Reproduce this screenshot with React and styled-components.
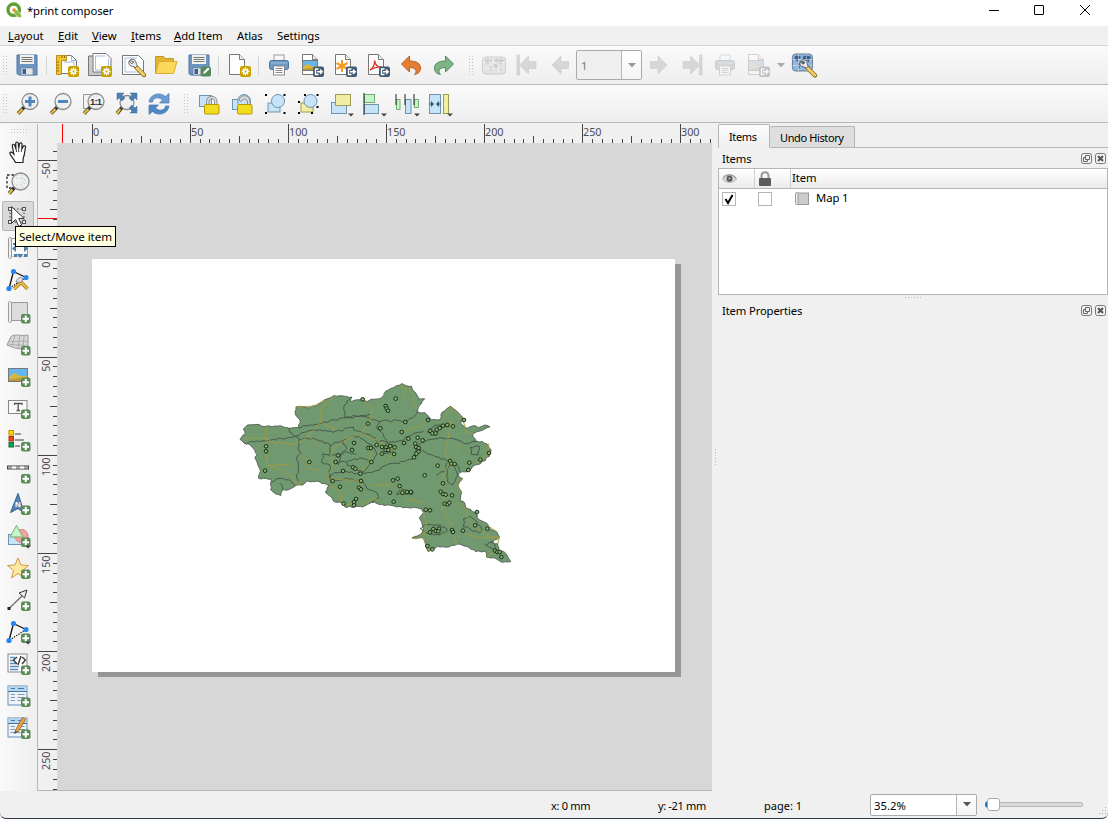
import React from "react";
import styled, { createGlobalStyle, css } from "styled-components";

const Global = createGlobalStyle`
  * { box-sizing: border-box; }
  html, body { margin: 0; background: #fff; }
  body { font-family: "Noto Sans", "Open Sans", sans-serif; font-size: 11.3px; color: #000; }
  svg { display: block; overflow: visible; }
`;

const Window = styled.div`
  width: 1108px;
  height: 819px;
  display: flex;
  flex-direction: column;
  background: #f0f0f0;
  border-bottom: 1px solid #2f3d4a;
  border-radius: 0 0 6px 6px;
  overflow: hidden;
`;

const TitleBar = styled.header`
  height: 26px;
  background: #fff;
  display: flex;
  align-items: flex-start;
  padding: 2px 17px 0 6px;
`;
const Title = styled.div`
  margin: 1px auto 0 5px;
  line-height: 16px;
  letter-spacing: -0.1px;
`;
const WindowButtons = styled.div`
  display: flex;
  gap: 35px;
  padding-top: 3px;
`;

const MenuBar = styled.nav`
  height: 20px;
  display: flex;
  padding-left: 8px;
  border-bottom: 1px solid #d5d5d5;
`;
const MenuItem = styled.div`
  width: ${(p) => p.$w}px;
  line-height: 20px;
  white-space: nowrap;
  letter-spacing: -0.05px;
  &::first-letter { text-decoration: ${(p) => (p.$plain ? "none" : "underline")}; }
`;

const ToolBar = styled.div`
  height: ${(p) => p.$h}px;
  display: flex;
  align-items: center;
  background: linear-gradient(#fafafa, #eeeeee);
  border-bottom: 1px solid #b8b8b8;
`;
const Slot = styled.div`
  width: 33px;
  height: 32px;
  flex: none;
  display: flex;
  align-items: center;
  justify-content: center;
  opacity: ${(p) => (p.$disabled ? 0.3 : 1)};
  filter: ${(p) => (p.$disabled ? "grayscale(0.75)" : "none")};
`;
const Handle = styled.div`
  flex: none;
  width: 5px;
  height: 19px;
  margin: ${(p) => p.$m};
  background-image: linear-gradient(#c4c4c4, #c4c4c4);
  background: conic-gradient(#c6c6c6 25%, transparent 0) 0 0 / 2px 2px;
  background: radial-gradient(circle at 0.5px 0.5px, #c4c4c4 0.6px, transparent 0.7px) 0 0 / 3px 3px;
`;
const Separator = styled.div`
  flex: none;
  width: 1px;
  height: 19px;
  margin: 0 3px;
  background: #d4d4d4;
`;

const Combo = styled.div`
  display: flex;
  flex: none;
  width: ${(p) => p.$w}px;
  height: ${(p) => p.$h}px;
  border: 1px solid #aaa;
  border-radius: 2px;
  background: ${(p) => (p.$disabled ? "#efefef" : "#fff")};
`;
const ComboText = styled.div`
  flex: 1;
  padding-left: ${(p) => (p.$muted ? 4 : 3)}px;
  padding-top: 1px;
  display: flex;
  align-items: center;
  color: ${(p) => (p.$muted ? "#777" : "#000")};
`;
const ComboButton = styled.div`
  width: 20px;
  border-left: 1px solid #b5b5b5;
  background: linear-gradient(#fff, #f4f4f4);
  display: flex;
  align-items: center;
  justify-content: center;
  color: ${(p) => (p.$muted ? "#999" : "#555")};
`;
const ArrowSlot = styled.div`
  width: 13px;
  display: flex;
  justify-content: center;
  color: #aaa;
`;

const Body = styled.main`
  flex: 1;
  min-height: 0;
  display: flex;
  padding-top: 1px;
`;
const SideTools = styled.aside`
  width: 38px;
  flex: none;
  border-right: 1px solid #b8b8b8;
  background: linear-gradient(90deg, #fafafa, #eeeeee);
  display: flex;
  flex-direction: column;
`;
const SideHandle = styled.div`
  width: 18px;
  height: 5px;
  margin: 5px 0 2px 11px;
  background: radial-gradient(circle at 0.5px 0.5px, #c4c4c4 0.6px, transparent 0.7px) 0 0 / 3px 3px;
`;
const SideSlot = styled.div`
  width: 32px;
  height: 32px;
  flex: none;
  margin-left: 2px;
  display: flex;
  align-items: center;
  justify-content: center;
  border-radius: 2px;
  position: relative;
  ${(p) => p.$active && css`
    height: 30px;
    margin-top: 1px;
    margin-bottom: 1px;
    background: #d9d9d9;
    box-shadow: inset 0 0 0 1px #b4b4b4;
  `}
`;
const Tooltip = styled.div`
  position: absolute;
  z-index: 5;
  left: 13px;
  top: 25px;
  width: 101px;
  height: 21px;
  border: 1px solid #000;
  background: #ffffe1;
  padding-left: 3px;
  line-height: 19px;
  font-size: 11.6px;
  letter-spacing: -0.05px;
  white-space: nowrap;
`;
const Cursor = styled.div`
  position: absolute;
  z-index: 6;
  left: 9px;
  top: 5px;
`;

const Workspace = styled.section`
  width: 674px;
  flex: none;
  display: grid;
  grid-template: 19px 1fr / 19px 1fr;
  border-bottom: 1px solid #b8b8b8;
`;
const Canvas = styled.div`
  background: #d7d7d7;
  padding: 116px 0 0 35px;
`;
const Paper = styled.div`
  width: 583px;
  height: 413px;
  background: #fff;
  box-shadow: 6px 5px 0 0 #969696;
  padding: 116px 0 0 138px;
`;

const Dock = styled.section`
  flex: 1;
  display: flex;
  min-width: 0;
`;
const Splitter = styled.div`
  width: 6px;
  display: flex;
  align-items: center;
  justify-content: center;
`;
const Dots = styled.div`
  width: ${(p) => (p.$v ? 1 : 17)}px;
  height: ${(p) => (p.$v ? 17 : 1)}px;
  background: repeating-linear-gradient(${(p) => (p.$v ? "180deg" : "90deg")}, #b5b5b5 0 1px, transparent 1px 3px);
`;
const DockColumn = styled.div`
  flex: 1;
  display: flex;
  flex-direction: column;
`;
const Tabs = styled.div`
  height: 24px;
  display: flex;
  align-items: flex-end;
  box-shadow: inset 0 -1px #b8b8b8;
`;
const Tab = styled.div`
  width: ${(p) => p.$w}px;
  height: ${(p) => (p.$active ? 24 : 22)}px;
  line-height: ${(p) => (p.$active ? 24 : 22)}px;
  border: 1px solid #b5b5b5;
  border-left-width: ${(p) => (p.$active ? 1 : 0)}px;
  border-bottom-color: ${(p) => (p.$active ? "#f0f0f0" : "#b8b8b8")};
  border-radius: 2px 2px 0 0;
  padding-left: 10px;
  white-space: nowrap;
  font-size: 11px;
  letter-spacing: -0.38px;
  background: ${(p) => (p.$active ? "linear-gradient(#fcfcfc,#f0f0f0)" : "#dedede")};
`;
const DockTitle = styled.div`
  height: ${(p) => p.$h}px;
  display: flex;
  align-items: center;
  padding: 0 2px 0 4px;
  gap: 3px;
`;
const DockName = styled.div`
  flex: 1;
  letter-spacing: -0.16px;
`;
const List = styled.div`
  height: 127px;
  border: 1px solid #b5b5b5;
  background: #fff;
`;
const Row = styled.div`
  height: ${(p) => (p.$head ? 20 : 19)}px;
  display: grid;
  grid-template-columns: 36px 36px 1fr;
  align-items: center;
  ${(p) => p.$head && css`
    background: linear-gradient(#ffffff, #ebebeb);
    border-bottom: 1px solid #b5b5b5;
  `}
`;
const Cell = styled.div`
  height: 100%;
  display: flex;
  align-items: center;
  padding-left: ${(p) => p.$pl}px;
  border-right: ${(p) => (p.$line ? "1px solid #d0d0d0" : "0")};
  gap: 7px;
`;
const Label = styled.span`
  padding-bottom: ${(p) => p.$up}px;
  letter-spacing: -0.1px;
`;
const CheckBox = styled.div`
  width: 14px;
  height: 14px;
  border: 1px solid #b5b5b5;
  background: #fff;
`;
const SplitRow = styled.div`
  height: 5px;
  display: flex;
  align-items: center;
  justify-content: center;
`;

const StatusBar = styled.footer`
  height: 27px;
  flex: none;
  display: flex;
  align-items: center;
  padding-left: 551px;
`;
const StatusText = styled.div`
  width: ${(p) => p.$w}px;
  padding-top: 2px;
  font-size: 11px;
  letter-spacing: ${(p) => p.$ls}px;
`;
const Slider = styled.div`
  width: 98px;
  height: 14px;
  margin-left: 8px;
  display: flex;
  align-items: center;
`;
const Cap = styled.div`
  width: 5px;
  height: 7px;
  margin-right: -3px;
  border-radius: 4px 0 0 4px;
  background: #1b6fb3;
`;
const Knob = styled.div`
  width: 13px;
  height: 13px;
  position: relative;
  border: 1px solid #aaa;
  border-radius: 3px;
  background: #fff;
`;
const Track = styled.div`
  flex: 1;
  height: 5px;
  border: 1px solid #b8b8b8;
  border-left: 0;
  border-radius: 0 2px 2px 0;
  background: #d9d9d9;
`;
const Grip = styled.div`
  margin: 14px 1px 0 auto;
`;

const Ico = ({ children, s = 24 }) => (
  <svg width={s} height={s} viewBox={`0 0 ${s} ${s}`}>{children}</svg>
);
const Down = () => <svg width="8" height="5"><path d="M0 0h8L4 4.5z" fill="currentColor" /></svg>;

const NewBadge = () => (
  <g>
    <rect x="13" y="13" width="11" height="11" rx="2" fill="#c8a300" />
    <path d="M18.500 14.500v8M14.500 18.500h8M15.800 15.800l5.400 5.400M21.200 15.800l-5.400 5.400" stroke="#fff" strokeWidth="1.300" />
    <circle cx="18.500" cy="18.500" r="2.300" fill="#fff" /><circle cx="18.500" cy="18.500" r="1" fill="#c8a300" />
  </g>
);
const ExportBadge = () => (
  <g>
    <rect x="13" y="13.500" width="11" height="10.500" rx="2" fill="#415a70" />
    <path d="M18.500 16h-3v5.500h3M17 18.800h5M20 16.500l2.300 2.300L20 21" fill="none" stroke="#fff" strokeWidth="1.400" />
  </g>
);
const Plus = ({ x = 15, y = 13 }) => (
  <g transform={`translate(${x} ${y})`}>
    <rect width="9.500" height="9.500" rx="2" fill="#5a8c5a" />
    <path d="M4.750 1.500v6.500M1.500 4.750H8" stroke="#fff" strokeWidth="2" />
  </g>
);
const PageShape = () => (
  <g><path d="M2.500 1.500h10l5 5v15h-15z" fill="#fdfdfd" stroke="#777" /><path d="M12.500 1.500v5h5" fill="#eee" stroke="#777" /></g>
);
const Floppy = () => (
  <g>
    <path d="M2 2h20v20H3.500L2 20.500z" fill="#6d94c1" stroke="#4d76a5" />
    <rect x="5" y="2" width="14" height="9" fill="#f1f1ee" />
    <path d="M6.500 4.500h11M6.500 6.500h11M6.500 8.500h11" stroke="#777" />
    <path d="M6 15h12v7H6z" fill="#e4e4e2" stroke="#55779d" strokeWidth=".6" /><rect x="7.500" y="16" width="3.500" height="5" fill="#3f5f86" />
  </g>
);
const Wrench = () => (
  <g>
    <path d="M13.500 13l8 8" stroke="#8a7020" strokeWidth="4.500" strokeLinecap="round" />
    <path d="M14 13.500l7.300 7.300" stroke="#f2ce66" strokeWidth="2.800" strokeLinecap="round" />
    <path d="M7 6.500c2-2 5-1.500 6 .5.800 1.500.5 3 1.800 4.700l-2 2c-1.500-1.500-3-1-4.800-2-1.700-1-2-3-1.500-4.500l2.500 2.300 1.700-.5.300-1.500z" fill="#ececec" stroke="#555" strokeWidth=".9" />
  </g>
);
const Lens = ({ x = 15, y = 9.5, r = 8 }) => (
  <g>
    <path d={`M${x - r * 0.7} ${y + r * 0.7}L3 21.500`} stroke="#333" strokeWidth="3.600" />
    <path d={`M${x - r * 0.95} ${y + r * 0.95}L3 21.500`} stroke="#eec12e" strokeWidth="2.200" />
    <circle cx={x} cy={y} r={r} fill="#eef0f0" fillOpacity=".92" stroke="#8a8d8d" strokeWidth="1.300" />
  </g>
);
const Printer = () => (
  <g>
    <rect x="7" y="2" width="10" height="8" fill="#f7f7f7" stroke="#999" />
    <rect x="2.500" y="7.500" width="19" height="9" rx="2" fill="#6d99c4" stroke="#48749f" />
    <path d="M4 10h16" stroke="#9cc0e0" />
    <rect x="6.500" y="13" width="11" height="9" fill="#fff" stroke="#888" />
    <path d="M8.500 15.500h7M8.500 17.500h7M8.500 19.500h7" stroke="#888" />
  </g>
);
const Picture = ({ x, y, w, h }) => (
  <g transform={`translate(${x} ${y})`}>
    <rect width={w} height={h} fill="#63b4ef" stroke="#777" />
    <path d={`M.5 ${h * 0.65}L${w * 0.3} ${h * 0.32} ${w * 0.65} ${h * 0.6} ${w - 0.5} ${h * 0.55}V${h - 0.5}H.5z`} fill="#d6b745" />
    <path d={`M.5 ${h * 0.85}L${w - 0.5} ${h * 0.65}V${h - 0.5}H.5z`} fill="#b99a35" />
  </g>
);
const MiniSun = () => (
  <g stroke="#f79a1e" strokeWidth="2"><path d="M9 7v12M3.500 10l11 6M14.500 10l-11 6" /><circle cx="9" cy="13" r="1.500" fill="#f79a1e" /></g>
);
const WorldMap = ({ color, land }) => (
  <g>
    <rect x=".5" y="4" width="23" height="17" rx="3.500" fill={color} stroke="#62748a" />
    <path d="M3 6.500l3-1 3.500.5.500 2-2 1.500-1 2-2-.5-2-2zM7 12.500l3 1.500-1 3-1 2.500-1-3zM12 7l3-1.500 5 .5 2 1.500-2 2.500-1 2.500-1.500-2-1 1.500-1-2.500-2 0zM12 11l3 .5.500 2-1.500 4-1-3-1.500-1.500zM18 15l2.500.5-.5 2-2-.5z" fill={land} opacity=".85" />
    <path d="M.5 9.500h23M.5 15.500h23M7.500 4v17M16.500 4v17" stroke="#fff" strokeWidth=".6" opacity=".8" />
  </g>
);
const Arrow = ({ flip, bar }) => (
  <g transform={flip ? "translate(24 0) scale(-1 1)" : undefined} fill="#8896a4" stroke="#77828e" strokeWidth=".8">
    {bar && <rect x="2" y="2" width="2.500" height="20" />}
    <path d={bar ? "M4.500 12L13.500 3v5.500H21v7h-7.500V21z" : "M4 12l9-9v5.500h7.500v7H13V21z"} />
  </g>
);
const Padlock = ({ open }) => (
  <g>
    <path d={open ? "M9 8.500c1-7 11-6 11 1v5h-2.500V10c0-4-5.500-4-6-.5z" : "M9.500 14V9.500c0-7 10.500-7 10.500 0V14h-2.500V9.500c0-3.700-5.500-3.700-5.500 0V14z"} fill="#ddd" stroke="#777" strokeWidth=".8" />
    <rect x="7.500" y="12.500" width="14.500" height="9.500" rx="1" fill="#f2dc1e" stroke="#b89800" />
  </g>
);
const BlackDots = ({ pts }) => <g>{pts.map(([x, y]) => <rect key={x + "-" + y} x={x} y={y} width="2" height="2" />)}</g>;
const Drop = () => <path d="M19 21.500h6l-3 3z" fill="#444" />;
const BLUE = { fill: "#c6e3f7", stroke: "#6f94ad" };
const GREEN = { fill: "#c3f5c6", stroke: "#74ad78" };
const YELLOW = { fill: "#f1eea2", stroke: "#9e9a58" };

const icons = {
  save: <Ico><Floppy /></Ico>,
  newLayout: <Ico><path d="M5.500 2.500h11l5 5v13h-16z" fill="#fff" stroke="#777" /><path d="M16.500 2.500v5h5M9 9h10v9" fill="none" stroke="#9db4e0" /><path d="M1.500 2.500h10v5h-5v14h-5z" fill="#f3c52c" stroke="#b8901a" /><path d="M4 5h.5M7 3v2M9.500 3v2M2 9h2M2 12h2M2 15h2M2 18h2" stroke="#8b6b10" /><NewBadge /></Ico>,
  duplicate: <Ico><path d="M.5 3h18v19.500H.5z" fill="#c9c9c9" stroke="#777" /><path d="M5 .5h13l5 5v13.500H5z" fill="#fff" stroke="#777" /><path d="M7.500 3h10M7.500 3v14h13V6" fill="none" stroke="#a9bde6" /><NewBadge /></Ico>,
  manage: <Ico><path d="M1.500 2.500h16l5 5v14h-21z" fill="#fff" stroke="#777" /><path d="M4 5h12M4 5v14h16" fill="none" stroke="#a9bde6" /><g transform="translate(1.500 1)"><Wrench /></g></Ico>,
  open: <Ico><path d="M1.500 20.500V3.500h8l2 2h8V9" fill="#e3b52e" stroke="#c1962a" /><path d="M1.500 20.500L5 8.500h18L19.500 20.500z" fill="#fdd757" stroke="#d9ac32" /></Ico>,
  saveAs: <Ico><Floppy /><rect x="13.500" y="13.500" width="10.500" height="10" rx="2" fill="#568a5c" /><path d="M16 21l1-2.500 4-4 1.500 1.500-4 4z" fill="#fff" /></Ico>,
  addPage: <Ico><PageShape /><NewBadge /></Ico>,
  print: <Ico><Printer /></Ico>,
  exportImage: <Ico><PageShape /><Picture x={2.5} y={7.5} w={15} h={10} /><ExportBadge /></Ico>,
  exportSvg: <Ico><PageShape /><MiniSun /><ExportBadge /></Ico>,
  exportPdf: <Ico><PageShape /><path d="M4 17c3-1.500 5-6 4.500-9.500 1 5 4 7 7 6.500-4-.5-8 1-11.500 3z" fill="none" stroke="#dc3b30" strokeWidth="1.400" /><ExportBadge /></Ico>,
  undo: <Ico><path d="M2.500 11L10.500 3v5c7 0 11 2.500 11 7 0 4-2.500 6-6 6.500 3-3 2-7-5-7V19z" fill="#e57c33" stroke="#bb5f24" /></Ico>,
  redo: <Ico><path d="M21.500 11L13.500 3v5c-7 0-11 2.500-11 7 0 4 2.500 6 6 6.500-3-3-2-7 5-7V19z" fill="#7fb487" stroke="#538d5f" /></Ico>,
  atlas: <Ico><WorldMap color="#c2c4c6" land="#616569" /></Ico>,
  first: <Ico><Arrow bar /></Ico>,
  prev: <Ico><Arrow /></Ico>,
  next: <Ico><Arrow flip /></Ico>,
  last: <Ico><Arrow flip bar /></Ico>,
  atlasSettings: <Ico><g transform="translate(0 -3) scale(.87 1)"><WorldMap color="#8fb6e0" land="#284f7c" /></g><g transform="translate(1.500 1.500)"><Wrench /></g></Ico>,
  zoomIn: <Ico><Lens /><path d="M15 4.500v10M10 9.500h10" stroke="#5084ba" strokeWidth="3" /></Ico>,
  zoomOut: <Ico><Lens /><path d="M10 9.500h10" stroke="#5084ba" strokeWidth="3" /></Ico>,
  zoomActual: <Ico><rect x="2.500" y="2.500" width="13" height="14" fill="#f2f2f2" stroke="#999" /><Lens /><text x="9" y="13" fontSize="9.500" fontWeight="700" fontFamily="Liberation Sans" textLength="12" fill="#333">1:1</text></Ico>,
  zoomFull: <Ico><Lens x={13} y={10.5} r={7} /><g fill="#4f7fae" stroke="#3f6c99" strokeWidth=".5"><path d="M3 1h7L8 3l3 3-3 3-3-3-2 2zM23 1h-7l2 2-3 3 3 3 3-3 2 2zM23 21h-7l2-2-3-3 3-3 3 3 2-2z" /></g></Ico>,
  refresh: <Ico><path d="M2 10C3 2 13-.5 18.500 4.500L22 1.500v9.500h-9.500l3-3C11 4 6 6 5.500 10z" fill="#6a9bd2" stroke="#4878ad" strokeWidth=".7" /><path d="M22 14c-1 8-11 10.500-16.500 5.500L2 22.500V13h9.500l-3 3c4.500 4 9.500 2 10-2z" fill="#4f87c4" stroke="#4878ad" strokeWidth=".7" /></Ico>,
  lock: <Ico><rect x="2.500" y="3.500" width="12" height="11" {...BLUE} /><Padlock /></Ico>,
  unlock: <Ico><rect x="2.500" y="7.500" width="10" height="10" {...BLUE} /><circle cx="14" cy="9" r="6.500" {...BLUE} /><Padlock open /></Ico>,
  group: <Ico><rect x="5" y="11" width="12" height="9" {...BLUE} /><circle cx="15" cy="9" r="6.500" {...BLUE} /><BlackDots pts={[[2, 2], [20.5, 2], [2, 20], [20.5, 20]]} /></Ico>,
  ungroup: <Ico><rect x="5" y="11" width="12" height="9" {...YELLOW} /><circle cx="14.500" cy="9" r="6.500" {...BLUE} /><BlackDots pts={[[8, 2], [20.5, 2], [2, 9], [2, 20], [15, 20], [20.5, 14]]} /></Ico>,
  raise: <Ico><rect x="2.500" y="10.500" width="15" height="11" {...BLUE} /><rect x="6.500" y="2.500" width="15" height="11" {...YELLOW} /><Drop /></Ico>,
  align: <Ico><rect x="2.500" y="2.500" width="10" height="8" {...GREEN} /><rect x="2.500" y="12.500" width="14" height="9" {...BLUE} /><path d="M2 1v22" stroke="#222" /><Drop /></Ico>,
  distribute: <Ico><rect x="1.500" y="7.500" width="3.500" height="10" {...GREEN} /><rect x="10.500" y="7.500" width="5.500" height="14" {...BLUE} /><rect x="19.500" y="7.500" width="4" height="8" {...GREEN} /><path d="M1 2v11M10 2v11M19 2v11" stroke="#222" /><Drop /></Ico>,
  resize: <Ico><rect x="1.500" y="2.500" width="11" height="19" {...BLUE} /><path d="M1 12h4M9 12h4" stroke="#35506a" /><path d="M3 9l3 3-3 3zM11 9l-3 3 3 3z" fill="#35506a" /><rect x="15.500" y="2.500" width="5" height="19" {...YELLOW} /><Drop /></Ico>,
};

const Nodes = () => (
  <g>
    <path d="M7.500 3.500L3 20.500M7.500 3.500L20 9.500" stroke="#111" strokeWidth="1.300" /><path d="M20 9.500L3 20.500" stroke="#111" strokeWidth="1.200" strokeDasharray="1.300 1.300" />
    {[[7.5, 3.5], [20, 9.5], [3, 20.5]].map(([x, y]) => <circle key={x} cx={x} cy={y} r="2.600" fill="#2684f7" />)}
  </g>
);
const MapScroll = () => (
  <g>
    <path d="M5 2.500h16.500v18H5z" fill="#dcdcdc" stroke="#999" />
    <path d="M2.500 3c0-2 3-2 3 0v18c0 2-3 2-3 0z" fill="#eee" stroke="#999" />
  </g>
);
const TableIcon = () => (
  <g>
    <rect x="2" y="2" width="19" height="19" fill="#eef3f8" stroke="#6a8fb4" /><rect x="2.500" y="2.500" width="18" height="4.500" fill="#b3d6f0" />
    <path d="M2 7.500h19M5 4.500h4M12 4.500h6" stroke="#4878a8" strokeWidth="1.200" />
    <path d="M4.500 10.500H9M11.500 10.500h7M4.500 13.500H9M11.500 13.500h7M4.500 16.500H9M11.500 16.500h3" stroke="#7e98b5" strokeWidth="1.200" />
  </g>
);

const sideIcons = {
  pan: <Ico><path d="M9.500 22.500C8 18.500 4 15.500 3.800 13c.5-1.500 2.200-1 4 1L6.300 6c-.3-2 2-2.400 2.500-.5L10 9l-.3-5.500c0-2 2.400-2 2.600 0L12.700 8.500 13.500 4c.4-1.800 2.600-1.400 2.500.4L15.800 9l1.400-2.500c.9-1.500 2.700-.8 2.300.9-1 4-.5 7-2.300 10.600l-.2 4.500z" fill="#fff" stroke="#222" strokeWidth="1.200" /><path d="M10 9l.6 3M12.700 8.500v3.500M15.800 9l-.6 3" stroke="#444" /></Ico>,
  zoom: <Ico><rect x="1" y="3" width="16" height="13" fill="none" stroke="#222" strokeWidth="1.300" strokeDasharray="2.500 2" /><Lens x={14.5} y={9.5} r={8.5} /><path d="M10 6h8M10 13h8M19 7v5" stroke="#ccc" strokeDasharray="2 2" /></Ico>,
  select: <Ico><rect x="4" y="5" width="14" height="13" fill="none" stroke="#444" strokeDasharray="1.500 2" />{[[2.5, 3.5], [16.5, 3.5], [2.5, 16.5], [16.5, 16.5]].map(([x, y]) => <rect key={x + "-" + y} x={x} y={y} width="3" height="3" fill="#eee" stroke="#555" />)}</Ico>,
  moveContent: <Ico><MapScroll /><rect x="6" y="3" width="15" height="17.500" fill="#fafafa" /><path d="M14 3l3.500 4h-7zM14 22l3.500-4h-7zM6 12.500l4-3.500v7zM22 12.500L18 9v7z" fill="#4d7da9" /><path d="M8 18h3v3H8zM18 18h3v3h-3zM7 7h3v2H7z" fill="#4d7da9" /></Ico>,
  editNodes: <Ico><Nodes /><path d="M8 21L15 14.500M14 13l7.500 8" stroke="#9c741c" strokeWidth="3.300" /><path d="M8 21L15 14.500M14 13l7.500 8" stroke="#edbc3f" strokeWidth="2" /><path d="M10 14c1-4 5-6 7-3l-2 3.500z" fill="#ddd" stroke="#888" /></Ico>,
  addMap: <Ico><MapScroll /><Plus y={14} /></Ico>,
  add3d: <Ico><path d="M5 4.500c5-3 9 0 17-1.500v15c-7-2-10 0-21-5z" fill="#d8d8d8" stroke="#999" /><path d="M3.500 9c6 2 10-1 18 .5M2.500 12c8 2 11 0 19 2M9 3L6 14.500M14 3l-2 13M18 3.500l-1 14" fill="none" stroke="#aaa" /><Plus y={14} /></Ico>,
  addPicture: <Ico><Picture x={2.5} y={4.5} w={19} h={13} /><Plus y={13.5} /></Ico>,
  addLabel: <Ico><rect x="2.500" y="4.500" width="18.500" height="13" fill="#fafafa" stroke="#888" /><path d="M8.500 9V7.500h7.500V9M12.200 7.500v7M10.500 14.500h3.500" fill="none" stroke="#555" strokeWidth="1.300" /><Plus y={13.5} /></Ico>,
  addLegend: <Ico><g strokeWidth="1"><rect x="3" y="2.500" width="4.500" height="4.500" fill="#ffd500" stroke="#c78c00" /><rect x="3" y="8.500" width="4.500" height="4.500" fill="#f04a12" stroke="#a83208" /><rect x="3" y="14.500" width="4.500" height="4.500" fill="#12a454" stroke="#0c6b36" /></g><path d="M9 6h6M9 12h9M9 18h5" stroke="#999" strokeWidth="2" /><Plus y={14} /></Ico>,
  addScale: <Ico><rect x="1.500" y="6" width="21" height="3" fill="#bbb" stroke="#444" /><path d="M6 7.500h4M14 7.500h4" stroke="#fff" strokeWidth="2" /><Plus y={14} /></Ico>,
  addNorth: <Ico><path d="M12 1.500l6.500 20-6.500-5-7.500 4z" fill="#5584b4" stroke="#325d88" /><text x="9" y="14.500" fontSize="8" fontWeight="700" fontFamily="Liberation Sans" fill="#fff">N</text><Plus y={13.5} /></Ico>,
  addShape: <Ico><rect x="2.500" y="10.500" width="13" height="10" {...BLUE} /><circle cx="15.500" cy="12" r="6.500" fill="#f5a1a1" stroke="#d67878" /><path d="M10.500 1.500l6.500 11.500H4z" {...GREEN} /><Plus y={13.5} /><Drop /></Ico>,
  addMarker: <Ico><path d="M12 2l3 7 7.500.5-6 5 2 7.500-6.500-4.500L5.500 22l2-7.500-6-5L9 9z" fill="#fde9a0" stroke="#d19a48" /><Plus y={13.5} /></Ico>,
  addArrow: <Ico><path d="M3 20.500L17 7" stroke="#777" strokeWidth="1.500" /><path d="M21 2l-2.500 8L13 5z" fill="#eee" stroke="#333" /><rect x="1.500" y="19" width="3" height="3" fill="#222" /><Plus y={13.5} /></Ico>,
  addNode: <Ico><Nodes /><Plus y={13.5} /><Drop /></Ico>,
  addHtml: <Ico><rect x="2" y="2" width="19" height="18" fill="#fbfbfb" stroke="#888" /><path d="M4 5.500h5M4 8.500h4M4 11.500h6M4 14.500h9M4 17.500h8" stroke="#5b8bbd" strokeWidth="1.600" /><path d="M11 5l-3.500 3 3.500 4M16 5l3.500 3-3.500 4M15 4l-3 9" fill="none" stroke="#333" strokeWidth="1.300" /><Plus y={13.5} /></Ico>,
  addTable: <Ico><TableIcon /><Plus y={13.5} /></Ico>,
  addFixed: <Ico><TableIcon /><path d="M9 15L16.500 1.500l3 2L12 16z" fill="#e9a443" stroke="#93641d" strokeWidth=".8" /><path d="M9 15l3 1-4 2z" fill="#444" /><Plus y={13.5} /></Ico>,
};

const TICKS = Array.from({ length: 100 }, (_, i) => i - 30);
const RulerTop = () => (
  <svg width="655" height="19" style={{ gridColumn: 2 }} shapeRendering="crispEdges">
    {TICKS.map((k) => {
      const x = Math.floor(35.05 + k * 9.815);
      if (x < 8 || x > 654) return null;
      const top = k % 10 === 0 ? 0 : k % 5 === 0 ? 12 : 15;
      return (
        <g key={k}>
          <rect x={x} y={top} width="1" height={19 - top} fill="#444" />
          {k % 10 === 0 && <text x={x + 1} y="11.500" fontSize="10.800" fill="#4c4c5c">{k * 5}</text>}
        </g>
      );
    })}
    <rect x="5" y="0" width="1" height="19" fill="#f00" />
  </svg>
);
const RulerLeft = () => (
  <svg width="19" height="647" shapeRendering="crispEdges">
    {TICKS.map((k) => {
      const y = Math.floor(116.02 + k * 9.815);
      if (y < 4 || y > 646) return null;
      const left = k % 10 === 0 ? 0 : k % 5 === 0 ? 12 : 15;
      return (
        <g key={k}>
          <rect x={left} y={y} width={19 - left} height="1" fill="#444" />
          {k % 10 === 0 && <text transform={`translate(11.500 ${y + 2.5}) rotate(-90)`} textAnchor="end" fontSize="10.800" fill="#4c4c5c">{k * 5}</text>}
        </g>
      );
    })}
    <rect x="0" y="75" width="19" height="1" fill="#f00" />
  </svg>
);

/* Breaks every straight run into short irregular steps, as a surveyed border has. */
const rough = (d, amp, step = 11) => {
  let seed = 7;
  const rnd = () => {
    seed = (seed * 16807) % 2147483647;
    return seed / 2147483647 - 0.5;
  };
  const close = d.endsWith("z");
  return d.replace("z", "").split("M").filter((s) => s.trim()).map((part) => {
    const n = part.match(/-?[\d.]+/g).map(Number);
    const pts = [];
    for (let i = 0; i < n.length; i += 2) pts.push([n[i], n[i + 1]]);
    if (close) pts.push(pts[0]);
    const out = [pts[0].join(" ")];
    for (let i = 1; i < pts.length; i++) {
      const [ax, ay] = pts[i - 1];
      const [bx, by] = pts[i];
      const k = Math.max(1, Math.round(Math.hypot(bx - ax, by - ay) / step));
      for (let j = 1; j < k; j++) {
        out.push(`${(ax + ((bx - ax) * j) / k + rnd() * amp).toFixed(1)} ${(ay + ((by - ay) * j) / k + rnd() * amp).toFixed(1)}`);
      }
      out.push(`${bx} ${by}`);
    }
    return `M${out.join("L")}${close ? "z" : ""}`;
  }).join("");
};

const OUTLINE = "M30 193L46 176 40 162 52 150 78 148 105 155 150 152 178 160 205 158 210 135 197 120 198 95 230 98 262 92 285 74 312 62 365 66 362 80 395 74 410 80 425 72 455 68 475 45 515 26 545 34 556 52 568 72 584 71 568 92 562 108 590 118 604 134 630 134 636 112 660 94 680 108 698 126 692 146 712 160 735 152 745 158 765 150 780 156 750 168 728 176 738 198 770 206 784 226 778 244 752 266 735 270 715 288 690 292 686 304 698 310 684 330 695 352 690 378 704 384 708 400 738 412 744 432 772 446 780 462 800 470 808 486 780 502 802 506 806 526 826 534 842 560 815 562 790 548 770 546 765 528 738 530 710 514 680 508 656 516 622 514 595 530 580 490 546 489 572 478 580 460 568 430 580 412 575 400 520 398 490 392 455 388 425 382 398 396 345 396 335 384 310 378 286 350 296 332 262 318 232 318 218 330 196 332 176 344 160 344 152 362 140 358 122 344 124 312 86 310 90 282 75 250 82 240 68 218 58 208 44 206z";
const BOUNDS = [
  "M178 160L190 182 208 192 204 220 212 236 200 246 205 280 200 300 206 318",
  "M46 206L80 198 120 196 178 188 230 170 270 164 310 172 370 156",
  "M205 158L240 150 275 145 340 128 400 124 450 140 500 136 525 142 552 124 562 108",
  "M365 66L342 92 344 128 420 118", "M370 156L380 168 420 180 445 200 500 200 545 180 580 168",
  "M450 140L440 160 460 178 470 200", "M208 192L250 190 300 210 296 240 278 236 274 262 300 270 300 300 296 332",
  "M300 210L340 196 370 182 400 194 430 214 440 240 425 260 390 248 350 262 310 262",
  "M296 240L330 242 345 230 380 240", "M300 300L340 288 380 296 430 290 470 270 550 254 560 220 570 206 600 194 630 188 680 194 715 206 740 200",
  "M300 300L310 320 350 310 400 322 410 340 440 352 445 370 425 382",
  "M350 262L370 280 400 290 425 260", "M560 220L600 238 650 258 680 268 690 292",
  "M650 264L652 320 668 330 682 302 668 268", "M618 300L650 286 658 272",
  "M570 460L594 448 630 450 652 466 630 480 590 474z", "M700 432L718 424 740 440 756 462 748 475 720 462 700 456z",
  "M766 508L790 502 800 526 776 516z", "M722 216L748 214 744 240 724 238z",
  "M124 320L152 310 176 314 196 332M158 344L150 325", "M500 360L515 342 548 350 548 358 515 358z", "M340 196L350 220 332 236 324 270", "M455 220L470 206 490 212 488 230 458 236", "M600 160L625 150 660 154M590 170L620 180",
];
const ROADS = [
  "M40 190L108 190 112 152M108 190L108 245 114 272 182 268M114 272L150 282 190 308 198 330",
  "M108 190L140 204 196 208 236 182 272 142 272 104 314 60M236 182L264 212M272 142L322 164M198 96L250 94 285 76",
  "M204 236L230 252 240 282 268 284M218 320L198 332", "M370 182L310 220 302 248 308 274 292 304 300 330 330 350 332 380M300 312L390 316",
  "M370 182L340 200M398 74L425 100 420 140 392 176 430 190 470 218 494 224 470 260",
  "M510 28L530 42 515 78M535 40L552 64 548 88 560 98", "M516 170L570 154 590 134M640 134L664 94",
  "M664 94L698 132 708 170 728 176M664 132L656 180 644 226 660 260 640 300 632 350 650 390 634 400 660 440 680 508",
  "M686 208L682 230M776 206L780 234 735 268", "M552 250L552 280M430 332L480 330 500 312M500 330L530 372 576 382",
  "M698 310L684 330 692 352M680 380L710 404 712 430 738 458 780 486 808 486",
  "M580 410L590 440 580 490 598 530M546 489L572 488M700 476L750 488 808 490", "M808 486L804 506M790 530L770 546M772 452L800 470",
  "M400 314L386 340 376 380 345 392M390 390L425 372 446 374", "M430 214L416 266 392 290",
];
const POINTS = [[108, 214], [108, 229], [105, 287], [238, 261], [398, 73], [497, 71], [467, 93], [470, 100], [474, 107], [414, 146], [451, 160], [526, 141], [515, 171], [594, 135], [702, 135], [372, 204], [366, 225], [324, 241], [317, 261], [339, 288], [415, 219], [423, 219], [440, 210], [456, 216], [468, 217], [481, 213], [494, 217], [467, 225], [475, 225], [456, 236], [492, 237], [424, 261], [369, 277], [376, 281], [391, 296], [308, 318], [393, 318], [330, 335], [387, 338], [393, 343], [378, 372], [372, 381], [372, 391], [341, 386], [480, 353], [489, 316], [503, 311], [509, 333], [517, 353], [531, 351], [543, 351], [491, 380], [584, 301], [623, 272], [639, 325], [632, 350], [639, 357], [647, 359], [666, 361], [644, 386], [653, 388], [658, 383], [587, 404], [600, 406], [522, 204], [535, 191], [556, 206], [563, 188], [578, 196], [558, 216], [566, 219], [565, 230], [552, 247], [559, 236], [601, 168], [607, 175], [617, 175], [620, 164], [629, 159], [639, 152], [652, 150], [669, 154], [777, 234], [751, 254], [718, 263], [715, 285], [660, 258], [664, 266], [674, 267], [741, 411], [735, 451], [772, 461], [699, 467], [666, 465], [669, 471], [600, 472], [610, 462], [617, 468], [627, 461], [625, 469], [592, 513], [607, 523], [795, 527], [802, 531], [809, 531], [814, 546]];

const RegionMap = () => (
  <svg width="290" height="200" viewBox="0 0 870 600">
    <path d={rough(OUTLINE, 5, 8)} fill="#70996f" stroke="#59665a" strokeWidth="3" strokeLinejoin="round" />
    <g fill="none" stroke="#485a4c" strokeWidth="3">{BOUNDS.map((d) => <path key={d} d={rough(d, 8, 9)} />)}</g>
    <g fill="none" stroke="#a39a42" strokeWidth="2.800">{ROADS.map((d) => <path key={d} d={rough(d, 4, 16)} />)}</g>
    <g fill="#83b56e" stroke="#1c2b1c" strokeWidth="3">{POINTS.map(([x, y]) => <circle key={x + "," + y} cx={x} cy={y} r="5.500" />)}</g>
  </svg>
);

const FloatIcon = () => (
  <svg width="11" height="11"><rect x=".5" y=".5" width="10" height="10" rx="2" fill="#f3f3f3" stroke="#777" /><path d="M4.500 2.500h4v4h-4zM4.500 4.500h-2v4h4v-2" fill="none" stroke="#666" /></svg>
);
const CloseIcon = () => (
  <svg width="11" height="11"><rect x=".5" y=".5" width="10" height="10" rx="2" fill="#f3f3f3" stroke="#777" /><path d="M3 3l5 5M8 3L3 8" stroke="#555" strokeWidth="2" /></svg>
);

const Tools = ({ names, disabled }) => names.map((n) => <Slot key={n} $disabled={disabled}>{icons[n]}</Slot>);

const menus = [["Layout", 50], ["Edit", 34], ["View", 39], ["Items", 43], ["Add Item", 63], ["Atlas", 40, true], ["Settings", 60, true]];

export default function App() {
  return (
    <>
      <Global />
      <Window>
        <TitleBar>
          <svg width="16" height="16" viewBox="0 0 16 16">
            <circle cx="7.700" cy="7.700" r="5.700" fill="none" stroke="#60a036" strokeWidth="3.400" />
            <path d="M8 8h3l4.500 5v2.500H12L8 11z" fill="#8cbd3c" stroke="#fff" strokeWidth=".6" /><circle cx="8" cy="8" r="1.700" fill="#ef8a22" />
          </svg>
          <Title>*print composer</Title>
          <WindowButtons>
            <svg width="11" height="11"><path d="M1 5.500h10" stroke="#000" /></svg>
            <svg width="11" height="11"><rect x=".5" y=".5" width="9" height="9" rx=".5" fill="none" stroke="#000" /></svg>
            <svg width="11" height="11"><path d="M0 0L10 10M10 0L0 10" stroke="#000" /></svg>
          </WindowButtons>
        </TitleBar>
        <MenuBar>{menus.map(([t, w, plain]) => <MenuItem key={t} $w={w} $plain={plain}>{t}</MenuItem>)}</MenuBar>
        <ToolBar $h={39}>
          <Handle $m="0 2px 0 3px" />
          <Tools names={["save"]} /><Separator />
          <Tools names={["newLayout", "duplicate", "manage", "open", "saveAs"]} /><Separator />
          <Tools names={["addPage"]} /><Separator />
          <Tools names={["print", "exportImage", "exportSvg", "exportPdf", "undo", "redo"]} />
          <Handle $m="0 3px 0 9px" />
          <Tools names={["atlas", "first", "prev"]} disabled />
          <Combo $w={66} $h={30} $disabled>
            <ComboText $muted>1</ComboText>
            <ComboButton $muted><Down /></ComboButton>
          </Combo>
          <Tools names={["next", "last", "print", "exportImage"]} disabled />
          <ArrowSlot><Down /></ArrowSlot>
          <Tools names={["atlasSettings"]} />
        </ToolBar>
        <ToolBar $h={38}>
          <Handle $m="0 2px 0 3px" />
          <Tools names={["zoomIn", "zoomOut", "zoomActual", "zoomFull", "refresh"]} />
          <Handle $m="0 3px 0 9px" />
          <Tools names={["lock", "unlock", "group", "ungroup", "raise", "align", "distribute", "resize"]} />
        </ToolBar>
        <Body>
          <SideTools>
            <SideHandle />
            {Object.entries(sideIcons).map(([n, icon]) => (
              <SideSlot key={n} $active={n === "select"}>
                {icon}
                {n === "select" && (
                  <>
                    <Tooltip>Select/Move item</Tooltip>
                    <Cursor><svg width="16" height="22"><path d="M.7.700v16.500l4-3.700 3 6.800 3-1.300-3-6.500h5.500z" fill="#fff" stroke="#333" /></svg></Cursor>
                  </>
                )}
              </SideSlot>
            ))}
          </SideTools>
          <Workspace>
            <RulerTop />
            <RulerLeft />
            <Canvas><Paper><RegionMap /></Paper></Canvas>
          </Workspace>
          <Dock>
            <Splitter><Dots $v /></Splitter>
            <DockColumn>
              <Tabs><Tab $active $w={52}>Items</Tab><Tab $w={85}>Undo History</Tab></Tabs>
              <DockTitle $h={20}><DockName>Items</DockName><FloatIcon /><CloseIcon /></DockTitle>
              <List>
                <Row $head>
                  <Cell $pl={3} $line><svg width="15" height="10"><path d="M.5 5C4 0 11 0 14.500 5 11 9.500 4 9.500.5 5z" fill="#ddd" stroke="#aaa" /><path d="M1 3.500C5-.5 11 0 14 4" fill="none" stroke="#888" /><circle cx="7.500" cy="4.800" r="3" fill="#555" /><circle cx="7.500" cy="4.500" r="1" fill="#ccc" /></svg></Cell>
                  <Cell $pl={4} $line><svg width="12" height="15"><path d="M2.500 8V5c0-5 7-5 7 0v3" fill="none" stroke="#999" strokeWidth="2" /><rect y="7" width="12" height="8" rx="1" fill="#5c5c5c" /></svg></Cell>
                  <Cell $pl={1}><Label $up={2}>Item</Label></Cell>
                </Row>
                <Row>
                  <Cell $pl={3}><CheckBox><svg width="12" height="12"><path d="M2.500 6l2.500 4 4.500-8" fill="none" stroke="#000" strokeWidth="2" /></svg></CheckBox></Cell>
                  <Cell $pl={3}><CheckBox /></Cell>
                  <Cell $pl={4}><svg width="14" height="12"><rect x="2" y="0" width="11.500" height="11.500" fill="#ccc" stroke="#999" /><rect x=".5" y="-.5" width="2.500" height="12" rx="1" fill="#eee" stroke="#999" /></svg><Label $up={3}>Map 1</Label></Cell>
                </Row>
              </List>
              <SplitRow><Dots /></SplitRow>
              <DockTitle $h={21}><DockName>Item Properties</DockName><FloatIcon /><CloseIcon /></DockTitle>
            </DockColumn>
          </Dock>
        </Body>
        <StatusBar>
          <StatusText $w={107} $ls={-0.3}>x: 0 mm</StatusText>
          <StatusText $w={106} $ls={-0.35}>y: -21 mm</StatusText>
          <StatusText $w={106} $ls={0}>page: 1</StatusText>
          <Combo $w={107} $h={22}><ComboText>35.2%</ComboText><ComboButton><Down /></ComboButton></Combo>
          <Slider><Cap /><Knob /><Track /></Slider>
          <Grip><svg width="9" height="9" fill="#aaa"><path d="M7 0h1v1h-1zM7 3h1v1h-1zM4 3h1v1h-1zM7 6h1v1h-1zM4 6h1v1h-1zM1 6h1v1h-1z" /></svg></Grip>
        </StatusBar>
      </Window>
    </>
  );
}
